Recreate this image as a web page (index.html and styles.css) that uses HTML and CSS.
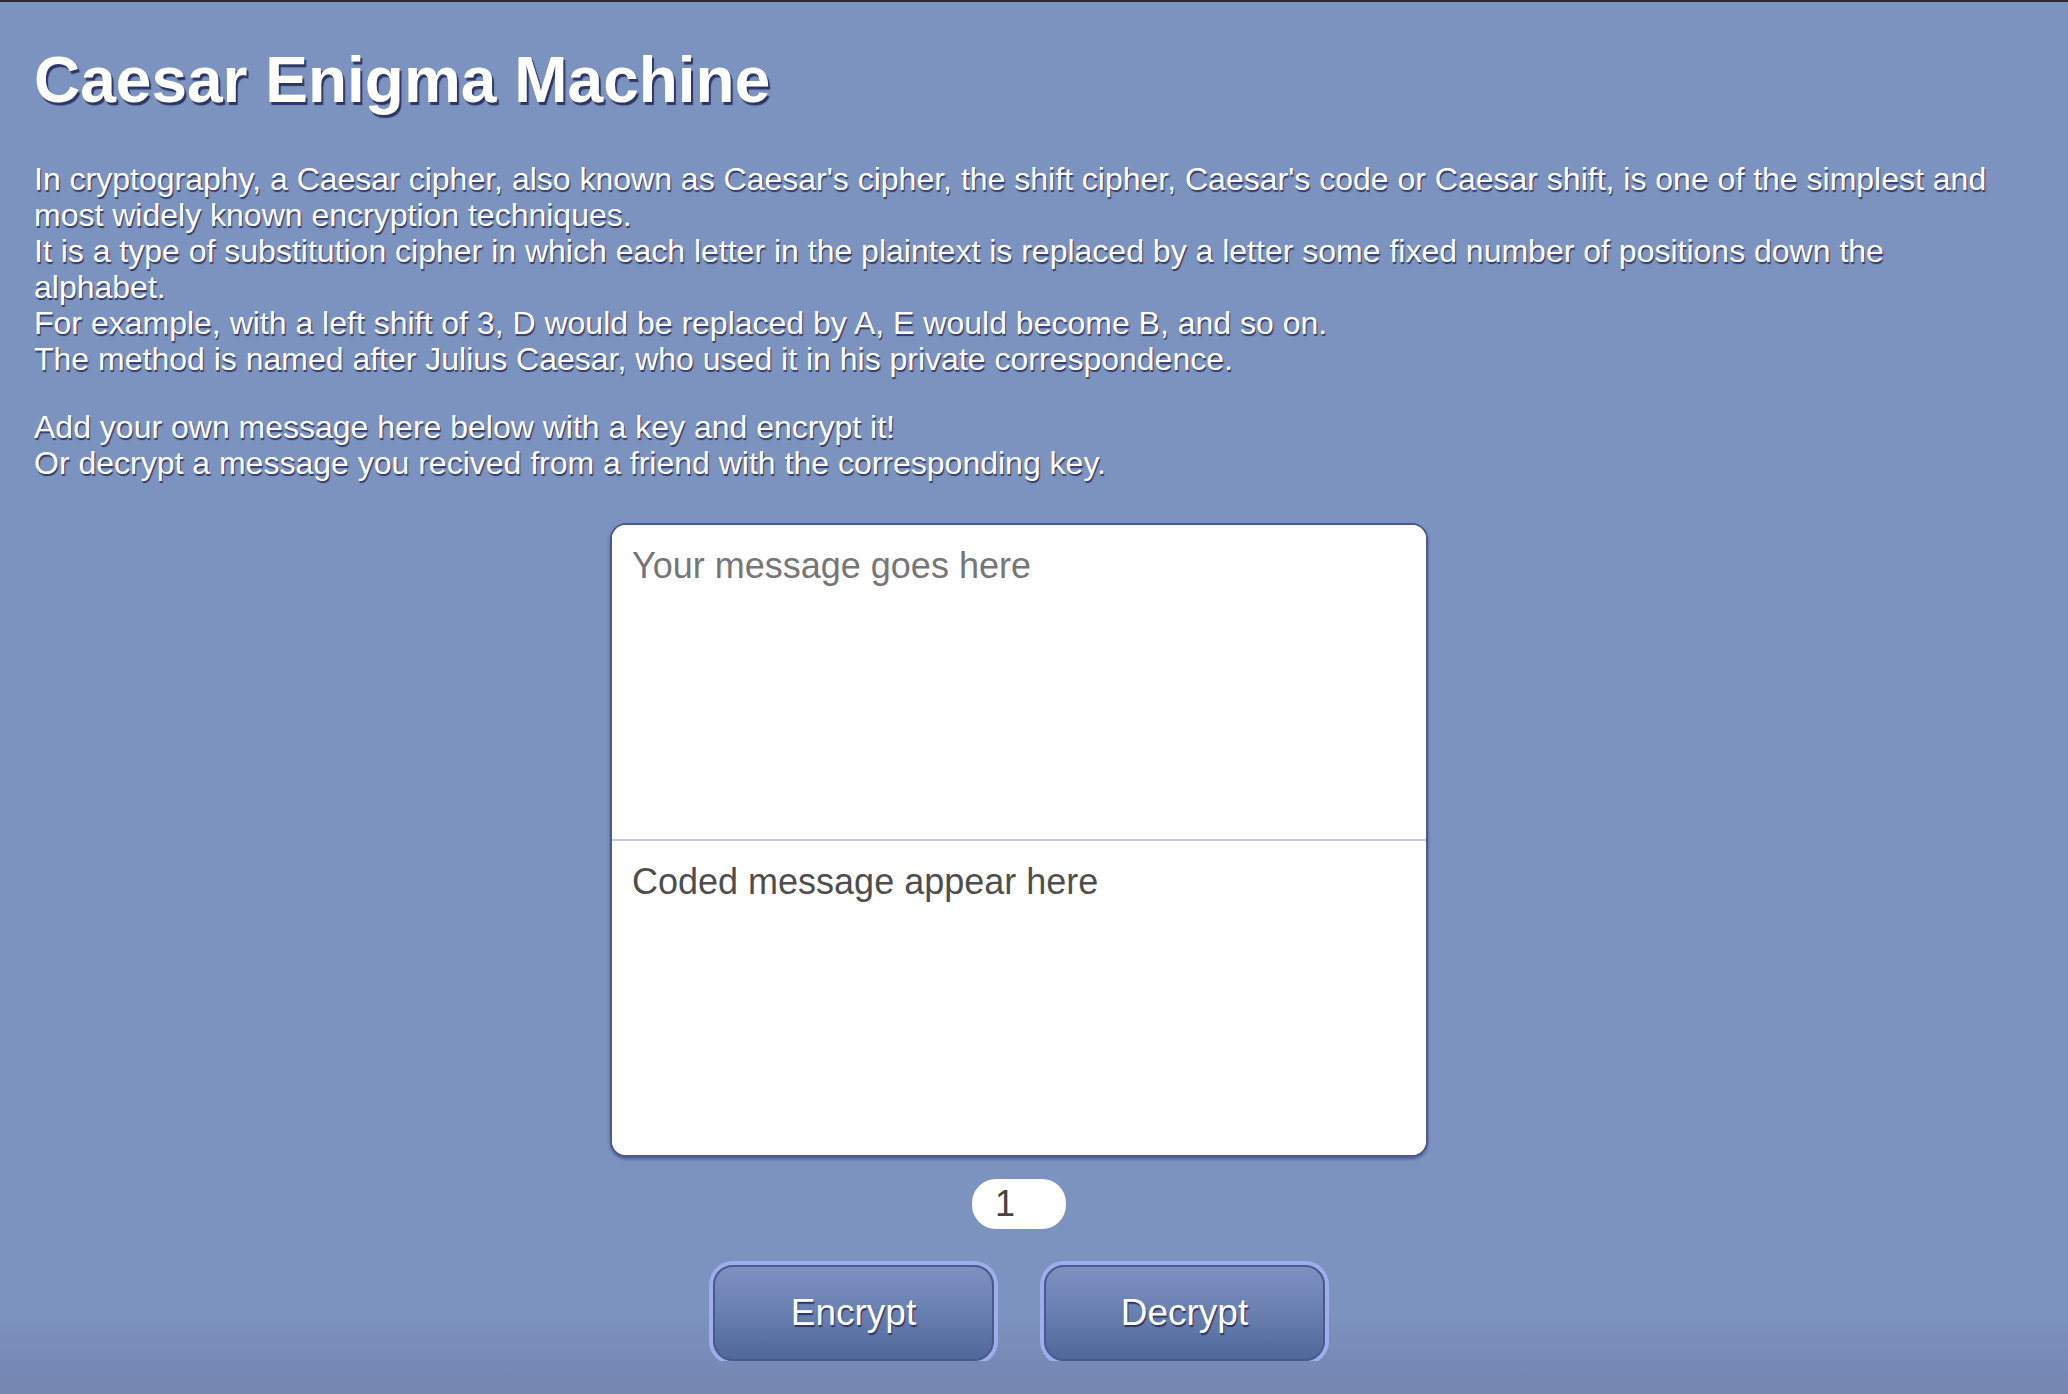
FILE: index.html
```html
<!DOCTYPE html>
<html lang="en">
<head>
<meta charset="utf-8">
<title>Caesar Enigma Machine</title>
<link rel="stylesheet" href="styles.css">
</head>
<body>
<div class="page">
  <h1 class="title">Caesar Enigma Machine</h1>
  <p class="text">In cryptography, a Caesar cipher, also known as Caesar's cipher, the shift cipher, Caesar's code or Caesar shift, is one of the simplest and most widely known encryption techniques.<br>It is a type of substitution cipher in which each letter in the plaintext is replaced by a letter some fixed number of positions down the alphabet.<br>For example, with a left shift of 3, D would be replaced by A, E would become B, and so on.<br>The method is named after Julius Caesar, who used it in his private correspondence.</p>
  <p class="text">Add your own message here below with a key and encrypt it!<br>Or decrypt a message you recived from a friend with the corresponding key.</p>
  <div class="machine">
    <div class="box">
      <textarea class="field field-in" placeholder="Your message goes here"></textarea>
      <textarea class="field field-out" placeholder="Coded message appear here" readonly></textarea>
    </div>
    <input class="key" type="number" value="1">
    <div class="buttons">
      <button class="btn" type="button">Encrypt</button>
      <button class="btn" type="button">Decrypt</button>
    </div>
  </div>
</div>
</body>
</html>
```
FILE: styles.css
```css
html {
  background: linear-gradient(to bottom, #7b93be 0, #7b93be 1310px, #7485b0 1394px);
  min-height: 100%;
}
body {
  margin: 0;
  border-top: 2px solid #2a2a2a;
  font-family: "Liberation Sans", Arial, sans-serif;
  color: #ffffff;
}
.page {
  padding: 0 64px 0 34px;
}
.title {
  font-size: 64px;
  font-weight: bold;
  margin: 41px 0 44px;
  text-shadow: 2px 3px 1px #2c3566;
}
.text {
  font-size: 32px;
  line-height: 36px;
  margin: 0 0 32px;
  text-shadow: 1px 2px 1px #313a6b;
}
.machine {
  display: flex;
  flex-direction: column;
  align-items: center;
  padding-top: 10px;
}
.box {
  width: 818px;
  box-sizing: border-box;
  border: 2px solid #4b5a92;
  border-radius: 16px;
  overflow: hidden;
  background: #fff;
  box-shadow: 0 2px 3px rgba(40, 50, 100, 0.55);
}
.field {
  display: block;
  width: 100%;
  box-sizing: border-box;
  border: none;
  margin: 0;
  padding: 20px;
  font-family: "Liberation Sans", Arial, sans-serif;
  font-size: 36px;
  resize: none;
  outline: none;
  background: #fff;
}
.field-in {
  height: 316px;
  border-bottom: 2px solid #c4cadf;
}
.field-out {
  height: 314px;
}
.field-in::placeholder {
  color: #767676;
}
.field-out::placeholder {
  color: #4e4e4e;
}
.key {
  margin-top: 22px;
  width: 94px;
  height: 50px;
  box-sizing: border-box;
  border: none;
  border-radius: 24px;
  padding: 0 0 0 23px;
  font-family: "Liberation Sans", Arial, sans-serif;
  font-size: 36px;
  color: #444;
  background: #fff;
  outline: none;
  -moz-appearance: textfield;
}
.key::-webkit-inner-spin-button,
.key::-webkit-outer-spin-button {
  -webkit-appearance: none;
  margin: 0;
}
.buttons {
  display: flex;
  gap: 50px;
  margin-top: 36px;
}
.btn {
  width: 281px;
  height: 96px;
  border: 2px solid #4b5a8c;
  border-radius: 20px;
  box-shadow: 0 0 0 4px #9eaeed;
  background: linear-gradient(to bottom, #7d91c1 0%, #6b81b2 45%, #4f6899 100%);
  color: #fff;
  font-family: "Liberation Sans", Arial, sans-serif;
  font-size: 37px;
  text-shadow: 1px 2px 1px #2c3566;
  cursor: pointer;
  padding: 0;
}
```
